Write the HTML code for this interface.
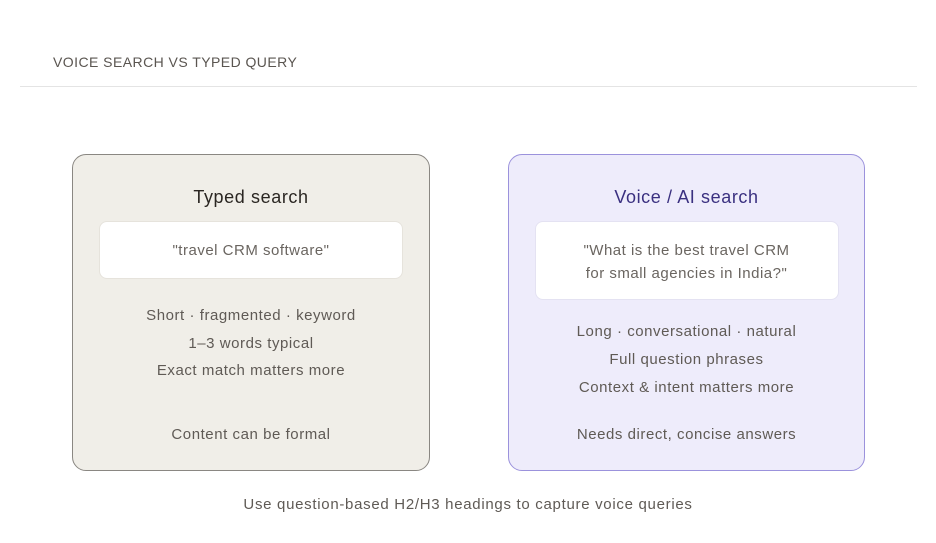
<!DOCTYPE html>
<html><head><style>
body{margin:0;width:936px;height:543px;background:#fff;font-family:"Liberation Sans",sans-serif;position:relative;overflow:hidden}
.a{position:absolute}
.t{position:absolute;left:0;right:0;text-align:center;white-space:nowrap}
.card{position:absolute;top:154px;width:358px;height:317px;border-radius:14px;box-sizing:border-box}
.box{position:absolute;left:26px;width:304px;background:#fff;border-radius:8px;border:1px solid #e6e3dc;box-sizing:border-box}
.q{font-size:15px;color:#6a6560;letter-spacing:0.5px}
.l{font-size:15px;color:#5f5a55;letter-spacing:0.55px}
</style></head><body>
<div class="a" style="left:53px;top:54px;font-size:14px;letter-spacing:0.45px;color:#5a5550">VOICE SEARCH VS TYPED QUERY</div>
<div class="a" style="left:20px;top:86px;width:897px;height:1px;background:#e4e4e4"></div>

<div class="card" style="left:72px;background:#f0eee8;border:1px solid #8a8782">
 <div class="t" style="top:32px;font-size:18px;color:#2a2622;letter-spacing:0.6px">Typed search</div>
 <div class="box" style="top:66px;height:58px"></div>
 <div class="t q" style="top:87px">"travel CRM software"</div>
 <div class="t l" style="top:152px">Short · fragmented · keyword</div>
 <div class="t l" style="top:180px">1–3 words typical</div>
 <div class="t l" style="top:207px">Exact match matters more</div>
 <div class="t l" style="top:271px">Content can be formal</div>
</div>

<div class="card" style="left:508px;width:357px;background:#eeecfb;border:1px solid #9b92dc">
 <div class="t" style="top:32px;font-size:18px;color:#3a3080;letter-spacing:0.6px">Voice / AI search</div>
 <div class="box" style="top:66px;height:79px;border-color:#e4e2f2"></div>
 <div class="t q" style="top:84px;line-height:23px">"What is the best travel CRM<br>for small agencies in India?"</div>
 <div class="t l" style="top:168px">Long · conversational · natural</div>
 <div class="t l" style="top:196px">Full question phrases</div>
 <div class="t l" style="top:224px">Context &amp; intent matters more</div>
 <div class="t l" style="top:271px">Needs direct, concise answers</div>
</div>

<div class="t" style="top:496px;font-size:15px;color:#5f5a55;left:0;width:936px;letter-spacing:0.7px">Use question-based H2/H3 headings to capture voice queries</div>
</body></html>
